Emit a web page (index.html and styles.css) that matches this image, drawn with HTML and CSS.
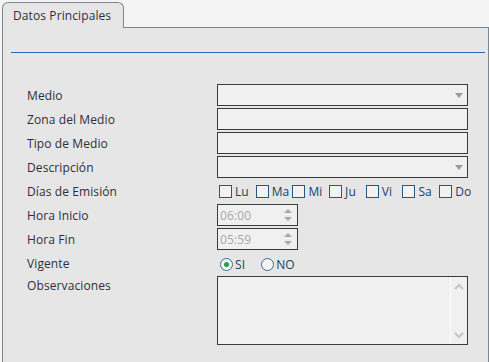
FILE: index.html
```html
<!DOCTYPE html>
<html lang="es">
<head>
    <meta charset="UTF-8">
    <meta name="viewport" content="width=device-width, initial-scale=1.0">
    <title>Datos Principales</title>
    <link rel="stylesheet" href="styles.css">
</head>
<body>
    <div class="tabs">
        <div class="tab">Datos Principales</div>
    </div>

    <div class="panel">
        <div class="rule"></div>

        <form class="form">
            <label class="label">Medio</label>
            <div class="field select"><span class="caret"></span></div>

            <label class="label">Zona del Medio</label>
            <input class="field" type="text">

            <label class="label">Tipo de Medio</label>
            <input class="field" type="text">

            <label class="label">Descripción</label>
            <div class="field select"><span class="caret"></span></div>

            <label class="label">Días de Emisión</label>
            <div class="days">
                <span class="day"><span class="box"></span>Lu</span>
                <span class="day"><span class="box"></span>Ma</span>
                <span class="day"><span class="box"></span>Mi</span>
                <span class="day"><span class="box"></span>Ju</span>
                <span class="day"><span class="box"></span>Vi</span>
                <span class="day"><span class="box"></span>Sa</span>
                <span class="day"><span class="box"></span>Do</span>
            </div>

            <label class="label">Hora Inicio</label>
            <div class="time">
                <span class="time-value">06:00</span>
                <svg class="spin" width="10" height="16" viewBox="0 0 10 16">
                    <path d="M1 6 L5 2 L9 6 Z" fill="#a8a8a8"/>
                    <path d="M1 10 L5 14 L9 10 Z" fill="#a8a8a8"/>
                </svg>
            </div>

            <label class="label">Hora Fin</label>
            <div class="time">
                <span class="time-value">05:59</span>
                <svg class="spin" width="10" height="16" viewBox="0 0 10 16">
                    <path d="M1 6 L5 2 L9 6 Z" fill="#a8a8a8"/>
                    <path d="M1 10 L5 14 L9 10 Z" fill="#a8a8a8"/>
                </svg>
            </div>

            <label class="label">Vigente</label>
            <div class="radios">
                <span class="radio-item"><span class="radio checked"></span>SI</span>
                <span class="radio-item"><span class="radio"></span>NO</span>
            </div>

            <label class="label label-top">Observaciones</label>
            <div class="field notes">
                <div class="scroll">
                    <svg width="10" height="8" viewBox="0 0 10 8"><path d="M1 6 L5 2 L9 6" fill="none" stroke="#c4c4c4" stroke-width="2"/></svg>
                    <svg width="10" height="8" viewBox="0 0 10 8"><path d="M1 2 L5 6 L9 2" fill="none" stroke="#c4c4c4" stroke-width="2"/></svg>
                </div>
            </div>
        </form>
    </div>
</body>
</html>
```

FILE: styles.css
```css
body {
    margin: 0;
    padding: 2px 0 0 2px;
    background-color: #f4f4f4;
    font-family: "Open Sans", "Noto Sans", sans-serif;
    font-size: 12px;
    letter-spacing: 0.1px;
    color: #2f2f3a;
}

.tabs {
    display: flex;
    margin-bottom: -1px;
    position: relative;
}

.tab {
    width: 110px;
    height: 25px;
    padding-left: 10px;
    line-height: 26px;
    background-color: #e6e6e6;
    border: 1px solid #7b8890;
    border-bottom: none;
    border-radius: 6px 6px 0 0;
}

.panel {
    height: 311px;
    background-color: #e6e6e6;
    border: 1px solid #7b8890;
    border-bottom: none;
    padding-top: 24px;
}

.rule {
    margin: 0 3px 0 8px;
    border-top: 1px solid #2b6ea6;
}

.form {
    display: grid;
    grid-template-columns: 190px 251px;
    grid-auto-rows: 22px;
    row-gap: 2px;
    margin: 31px 0 0 24px;
}

.label {
    align-self: center;
}

.label-top {
    align-self: start;
    padding-top: 1px;
}

.field {
    box-sizing: border-box;
    width: 251px;
    height: 22px;
    margin: 0;
    padding: 0 4px;
    border: 1px solid #3b3b3b;
    background-color: #f0f0f0;
    font: inherit;
}

.select {
    display: flex;
    align-items: center;
    justify-content: flex-end;
    padding-right: 4px;
}

.caret {
    width: 0;
    height: 0;
    border-left: 4px solid transparent;
    border-right: 4px solid transparent;
    border-top: 5px solid #9a9a9a;
    margin-top: 1px;
}

.days {
    display: flex;
    align-items: center;
    padding-left: 2px;
    color: #23406a;
}

.day {
    display: flex;
    align-items: center;
    width: 36.7px;
    flex-shrink: 0;
}

.box {
    box-sizing: border-box;
    width: 13px;
    height: 13px;
    margin-right: 3px;
    border: 1px solid #2a5585;
    background-color: #f2f2f2;
}

.time {
    box-sizing: border-box;
    width: 81px;
    height: 22px;
    display: flex;
    align-items: center;
    justify-content: space-between;
    padding: 0 4px 0 2px;
    border: 1px solid #3b3b3b;
    background-color: #f0f0f0;
    color: #a8a8a8;
}

.radios {
    display: flex;
    align-items: center;
    gap: 16px;
    padding-left: 3px;
    padding-top: 2px;
    color: #23406a;
}

.radio-item {
    display: flex;
    align-items: center;
}

.radio {
    box-sizing: border-box;
    width: 13px;
    height: 13px;
    margin-right: 2px;
    border: 1px solid #3a6a9a;
    border-radius: 50%;
    background-color: #f4f4f4;
    display: flex;
    align-items: center;
    justify-content: center;
}

.radio.checked::after {
    content: "";
    width: 5px;
    height: 5px;
    border-radius: 50%;
    background-color: #1fa04a;
}

.notes {
    grid-row: span 3;
    height: 69px;
    display: flex;
    justify-content: flex-end;
    padding: 0;
}

.scroll {
    width: 16px;
    border-left: 1px solid #ffffff;
    display: flex;
    flex-direction: column;
    align-items: center;
    justify-content: space-between;
    padding: 6px 0 5px;
}
```
